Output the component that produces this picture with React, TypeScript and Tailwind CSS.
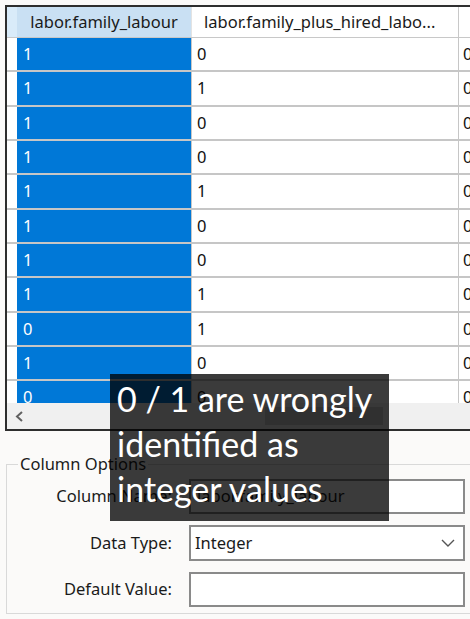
import React from 'react';

const rows = [
  { a: '1', b: '0', h: 'h-[34px]' },
  { a: '1', b: '1', h: 'h-[35px]' },
  { a: '1', b: '0', h: 'h-[34px]' },
  { a: '1', b: '0', h: 'h-[34px]' },
  { a: '1', b: '1', h: 'h-[35px]' },
  { a: '1', b: '0', h: 'h-[34px]' },
  { a: '1', b: '0', h: 'h-[34px]' },
  { a: '1', b: '1', h: 'h-[35px]' },
  { a: '0', b: '1', h: 'h-[34px]' },
  { a: '1', b: '0', h: 'h-[34px]' },
  { a: '0', b: '0', h: 'h-[34px]' },
];

const DataGrid: React.FC = () => (
  <div className="ml-[5px] mt-[5px] h-[426px] w-[500px] border-2 border-r-0 border-[#2e2e2e] bg-white flex flex-col overflow-hidden">
    {/* Header */}
    <div className="flex h-[31px] shrink-0 border-b border-[#c8c8c8] text-[16.5px] text-[#1a1a1a]">
      <div className="w-[10px] shrink-0 bg-[#d9ebf9]" />
      <div className="w-[175px] shrink-0 bg-[#c9e0f3] flex items-center justify-center border-r border-[#e3e3e3]">
        labor.family_labour
      </div>
      <div className="w-[267px] shrink-0 flex items-center pl-[12px] border-r border-[#c8c8c8] whitespace-nowrap">
        labor.family_plus_hired_labo...
      </div>
      <div className="flex-1" />
    </div>

    {/* Rows */}
    <div className="flex-1 overflow-hidden">
      {rows.map((r, i) => (
        <div key={i} className={`flex ${r.h} shrink-0 border-b-2 border-[#c6c6c6] text-[16.5px]`}>
          <div className="w-[10px] shrink-0 bg-white" />
          <div className="w-[174px] shrink-0 bg-[#0078d7] text-white flex items-center pl-[6px]">
            {r.a}
          </div>
          <div className="w-[1px] shrink-0 bg-[#c6c6c6]" />
          <div className="w-[266px] shrink-0 flex items-center pl-[5px] text-[#111]">{r.b}</div>
          <div className="w-[1px] shrink-0 bg-[#c6c6c6]" />
          <div className="flex-1 flex items-center pl-[4px] text-[#111]">0</div>
        </div>
      ))}
    </div>

    {/* Horizontal scrollbar */}
    <div className="h-[26px] shrink-0 bg-[#f0f0f0] flex items-center">
      <svg width="24" height="26" viewBox="0 0 24 26" className="shrink-0">
        <polyline points="15,9 10,13.5 15,18" fill="none" stroke="#606060" strokeWidth="2" />
      </svg>
      <div className="ml-[234px] h-[18px] w-[118px] bg-[#cdcdcd]" />
    </div>
  </div>
);

const Field: React.FC<{ label: string; children: React.ReactNode; h: string }> = ({ label, children, h }) => (
  <div className={`flex items-center ${h}`}>
    <div className="w-[165px] shrink-0 text-right text-[16.5px] text-[#1a1a1a]">{label}</div>
    <div className="ml-[17px] flex-1">{children}</div>
  </div>
);

export default function App() {
  return (
    <div
      className="relative w-[470px] h-[619px] overflow-hidden bg-[#fbfaf9]"
      style={{ fontFamily: '"Noto Sans", "Open Sans", sans-serif' }}
    >
      <DataGrid />

      <fieldset className="ml-[6px] mt-[23px] w-[480px] h-[160px] border border-[#d9d9d9] pt-[5px]">
        <legend className="ml-[11px] px-[2px] text-[16.5px] leading-[20px] text-[#1a1a1a]">Column Options</legend>
        <div className="flex flex-col gap-[11px]">
          <Field label="Column Name:" h="h-[35px]">
            <div className="h-[35px] w-[276px] border-2 border-[#8a8a8a] bg-white flex items-center pl-[6px] text-[16.5px] text-[#1a1a1a]">
              labor.family_labour
            </div>
          </Field>
          <Field label="Data Type:" h="h-[36px]">
            <div className="h-[36px] w-[276px] border-2 border-[#8a8a8a] bg-white flex items-center justify-between pl-[4px] pr-[8px] text-[16.5px] text-[#1a1a1a]">
              <span>Integer</span>
              <svg width="14" height="9" viewBox="0 0 14 9">
                <polyline points="1,1 7,7 13,1" fill="none" stroke="#555" strokeWidth="1.4" />
              </svg>
            </div>
          </Field>
          <Field label="Default Value:" h="h-[35px]">
            <div className="h-[35px] w-[276px] border-2 border-[#8a8a8a] bg-white" />
          </Field>
        </div>
      </fieldset>

      {/* Annotation overlay */}
      <div
        className="absolute left-[110px] top-[374px] w-[279px] h-[147px] bg-black/[0.77] text-white pl-[7px] pt-[2px] text-[34px] leading-[45px] whitespace-nowrap"
        style={{ fontFamily: 'Lato, "Open Sans", sans-serif' }}
      >
        <div>0 / 1 are wrongly</div>
        <div>identified as</div>
        <div>integer values</div>
      </div>
    </div>
  );
}
